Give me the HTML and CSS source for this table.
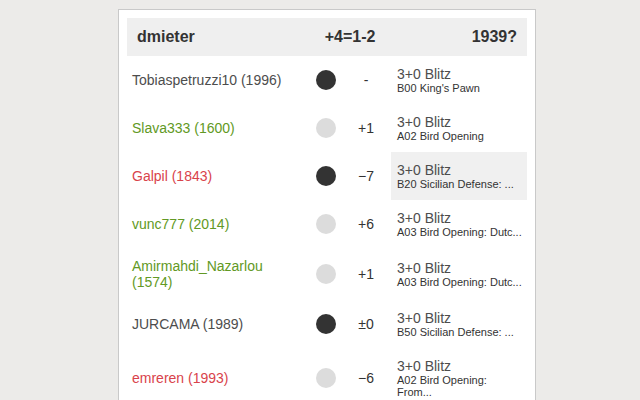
FILE: index.html
```html
<!DOCTYPE html>
<html>
<head>
<meta charset="utf-8">
<link rel="stylesheet" href="styles.css">
</head>
<body>
<div class="panel">
  <div class="head">
    <span class="h-name">dmieter</span>
    <span class="h-score">+4=1-2</span>
    <span class="h-rating">1939?</span>
  </div>
  <div class="row">
    <div class="name">Tobiaspetruzzi10 (1996)</div>
    <div class="col"><span class="dot black"></span></div>
    <div class="delta">-</div>
    <div class="info"><div class="tc">3+0 Blitz</div><div class="op">B00 King's Pawn</div></div>
  </div>
  <div class="row">
    <div class="name win">Slava333 (1600)</div>
    <div class="col"><span class="dot white"></span></div>
    <div class="delta">+1</div>
    <div class="info"><div class="tc">3+0 Blitz</div><div class="op">A02 Bird Opening</div></div>
  </div>
  <div class="row">
    <div class="name loss">Galpil (1843)</div>
    <div class="col"><span class="dot black"></span></div>
    <div class="delta">−7</div>
    <div class="info hl"><div class="tc">3+0 Blitz</div><div class="op">B20 Sicilian Defense: ...</div></div>
  </div>
  <div class="row">
    <div class="name win">vunc777 (2014)</div>
    <div class="col"><span class="dot white"></span></div>
    <div class="delta">+6</div>
    <div class="info"><div class="tc">3+0 Blitz</div><div class="op">A03 Bird Opening: Dutc...</div></div>
  </div>
  <div class="row">
    <div class="name win">Amirmahdi_Nazarlou (1574)</div>
    <div class="col"><span class="dot white"></span></div>
    <div class="delta">+1</div>
    <div class="info"><div class="tc">3+0 Blitz</div><div class="op">A03 Bird Opening: Dutc...</div></div>
  </div>
  <div class="row">
    <div class="name">JURCAMA (1989)</div>
    <div class="col"><span class="dot black"></span></div>
    <div class="delta">±0</div>
    <div class="info"><div class="tc">3+0 Blitz</div><div class="op">B50 Sicilian Defense: ...</div></div>
  </div>
  <div class="row">
    <div class="name loss">emreren (1993)</div>
    <div class="col"><span class="dot white"></span></div>
    <div class="delta">−6</div>
    <div class="info"><div class="tc">3+0 Blitz</div><div class="op">A02 Bird Opening: From...</div></div>
  </div>
</div>
</body>
</html>
```
FILE: styles.css
```css
html, body {
  margin: 0;
  padding: 0;
  background: #ecebe9;
  font-family: "Liberation Sans", Arial, sans-serif;
  color: #4d4d4d;
}
.panel {
  margin: 9px 0 0 118px;
  width: 400px;
  padding: 8px;
  background: #fff;
  border: 1px solid #c9c9c9;
  border-bottom: none;
  min-height: 400px;
}
.head {
  display: grid;
  grid-template-columns: 1fr auto 1fr;
  align-items: center;
  background: #efefef;
  height: 38px;
  padding: 0 10px;
  font-size: 16px;
  font-weight: bold;
  color: #333;
}
.h-score { margin-left: 46px; }
.h-rating { text-align: right; }
.row {
  display: grid;
  grid-template-columns: 179px 40px 40px 141px;
  column-gap: 0;
  align-items: stretch;
}
.row > div {
  display: flex;
  align-items: center;
}
.name {
  padding: 10px 8px 10px 5px;
  font-size: 14px;
  line-height: 16px;
}
.name.win { color: #629924; }
.name.loss { color: #d9434b; }
.col { justify-content: center; }
.dot {
  width: 20px;
  height: 20px;
  border-radius: 50%;
}
.dot.black { background: #333; }
.dot.white { background: #dcdcdc; }
.delta {
  justify-content: center;
  font-size: 14px;
  color: #333;
}
.row > .info {
  margin-left: 5px;
  flex-direction: column;
  align-items: flex-start;
  justify-content: center;
  padding: 10px 5px 10px 6px;
}
.info.hl { background: #f0f0f0; }
.tc {
  font-size: 14px;
  line-height: 16px;
  color: #4d4d4d;
}
.op {
  font-size: 11px;
  line-height: 12px;
  color: #333;
}
```
